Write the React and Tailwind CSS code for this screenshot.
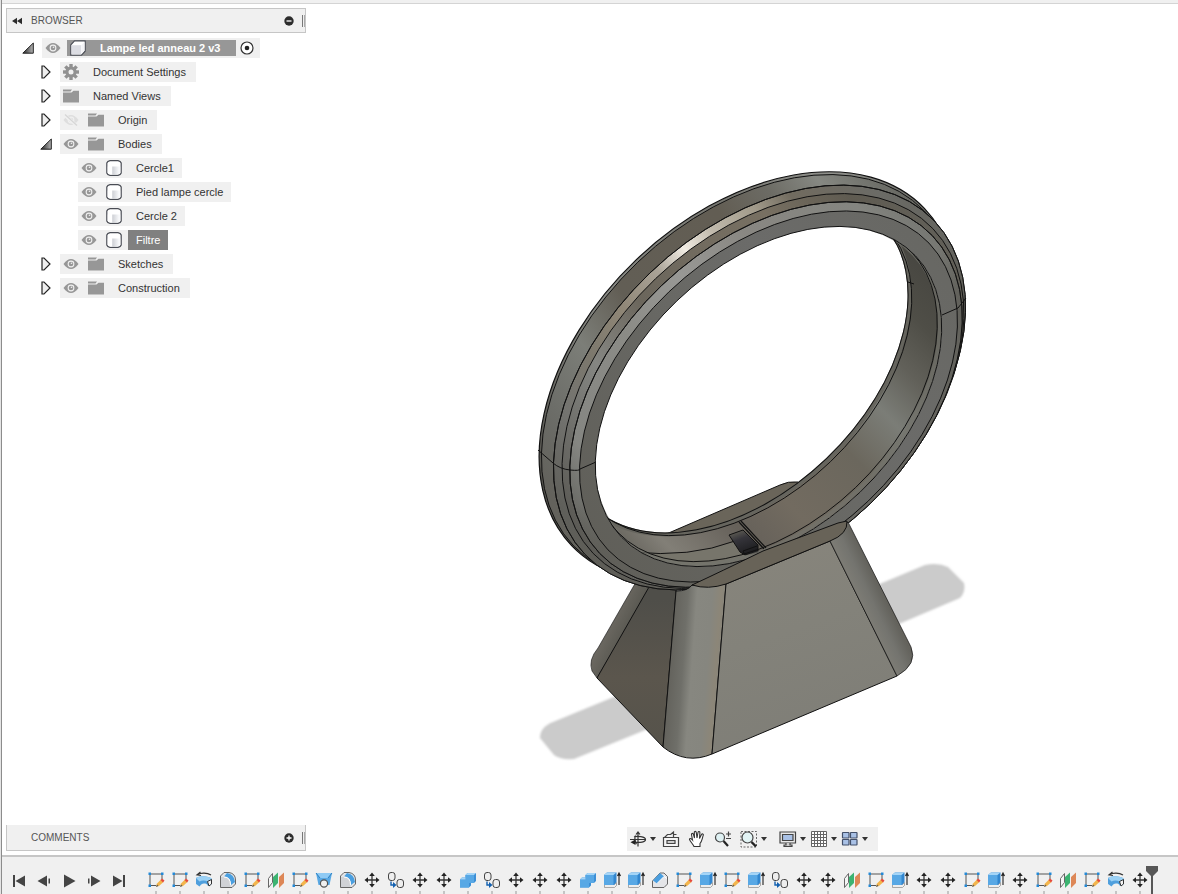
import React, { useState } from 'react';
import clsx from 'clsx';

/* ---------- tree icons ---------- */

const EyeIcon = ({ hidden }) => (
  <svg viewBox="0 0 16 12" className="w-4 h-3" fill="none">
    <path d="M0.500 6C3 2.400 5.400 1 8 1s5 1.400 7.500 5C13 9.600 10.600 11 8 11S3 9.600 0.500 6Z" fill={hidden ? '#dedede' : '#979797'} />
    <circle cx="8" cy="6" r="3.400" fill="#f0f0f0" />
    <circle cx="8" cy="6" r="2.300" fill={hidden ? '#dedede' : '#979797'} />
    <circle cx="8.500" cy="5.300" r="0.800" fill="#f0f0f0" />
    {hidden && (
      <>
        <path d="M1.500 1 13.500 11.500" stroke="#f0f0f0" strokeWidth="3" />
        <path d="M2 0.500 14 11.500" stroke="#d6d6d6" strokeWidth="1.300" />
      </>
    )}
  </svg>
);

const FolderIcon = () => (
  <svg viewBox="0 0 16 14" className="w-4 h-3.5">
    <path d="M0 0.500h9l-1.500 2H0ZM0 3.500h8.500l2-1.800H16V13.500H0Z" fill="#979797" />
  </svg>
);

const GearIcon = () => (
  <svg viewBox="0 0 16 16" className="w-4 h-4">
    <g fill="#919191">
      {[0, 45, 90, 135].map((a) => (
        <rect key={a} x="6.300" y="0" width="3.400" height="16" transform={`rotate(${a} 8 8)`} />
      ))}
      <circle cx="8" cy="8" r="5.600" />
    </g>
    <circle cx="8" cy="8" r="2.500" fill="#f0f0f0" />
  </svg>
);

const BodyIcon = () => (
  <svg viewBox="0 0 16 16" className="w-4 h-4">
    <defs>
      <linearGradient id="bodyFill">
        <stop offset="0" stopColor="#fff" />
        <stop offset="0.300" stopColor="#fff" />
        <stop offset="0.400" stopColor="#d0d2d7" />
        <stop offset="0.900" stopColor="#f8f9fb" />
      </linearGradient>
    </defs>
    <path
      d="M4 .7h8c1.500.3 2.800 1 3.200 2.300v10c-.4 1.300-1.700 2-3.200 2.300H4C2.500 15 1.200 14.300.8 13V3C1.200 1.700 2.500 1 4 .7Z"
      fill="#fff"
      stroke="#4a4d55"
      strokeWidth="1.200"
    />
    <path d="M1.800 6.500h12.400v6.200c-1 1.300-2 1.600-3 1.700H4.500c-1.200-.2-2-.7-2.700-1.700Z" fill="url(#bodyFill)" />
  </svg>
);

const CubeIcon = () => (
  <svg viewBox="0 0 16 16" className="w-4 h-4">
    <path d="M4.500.8H15.200V11l-3.700 4.200H.8V4.800Z" fill="#fff" stroke="#4a4d55" strokeWidth="1.200" strokeLinejoin="round" />
    <path d="M1.500 5.200h9.500v9.300H1.500Z" fill="#dcdde3" />
    <path d="M11.300 5.200 14.500 1.800V10.700l-3.200 3.600Z" fill="#f3f3f6" />
  </svg>
);

const Arrow = ({ open }) =>
  open ? (
    <svg viewBox="0 0 12 12" className="w-3 h-3">
      <defs>
        <linearGradient id="arrowFill" x1="0" y1="0" x2="1" y2="0">
          <stop offset="0.200" stopColor="#444" />
          <stop offset="1" stopColor="#b5b5b5" />
        </linearGradient>
      </defs>
      <path d="M11.300 1v10.200H.8Z" fill="url(#arrowFill)" stroke="#222" />
    </svg>
  ) : (
    <svg viewBox="0 0 10 14" className="w-2.5 h-3.5">
      <path d="M1 1h2L9 7 3 13H1Z" fill="#eee" stroke="#222" strokeWidth="1.200" />
    </svg>
  );

/* ---------- browser tree ---------- */

const Cell = ({ wide, children }) => (
  <span className={clsx('flex items-center justify-center shrink-0', wide ? 'w-7' : 'w-[22px]')}>{children}</span>
);

const nodes = [
  { name: 'Document Settings', icon: 'gear' },
  { name: 'Named Views', icon: 'folder' },
  { name: 'Origin', icon: 'folder', eye: true, hidden: true },
  {
    name: 'Bodies',
    icon: 'folder',
    eye: true,
    children: ['Cercle1', 'Pied lampe cercle', 'Cercle 2', 'Filtre'],
  },
  { name: 'Sketches', icon: 'folder', eye: true },
  { name: 'Construction', icon: 'folder', eye: true },
];

const EyeButton = ({ name, hidden }) => (
  <button aria-label={`Toggle visibility of ${name}`} className="flex">
    <Cell>
      <EyeIcon hidden={hidden} />
    </Cell>
  </button>
);

const TreeNode = ({ node, selected, onSelect }) => {
  const [open, setOpen] = useState(Boolean(node.children));

  return (
    <li>
      <div className="flex h-6 items-center">
        <button aria-label={`Expand ${node.name}`} onClick={() => setOpen(!open)} className="flex w-7 justify-center">
          <Arrow open={open} />
        </button>
        <div className="flex h-5 items-center bg-[#f0f0f0]">
          {node.eye && <EyeButton name={node.name} hidden={node.hidden} />}
          <Cell wide={node.eye}>{node.icon === 'gear' ? <GearIcon /> : <FolderIcon />}</Cell>
          <span className={clsx('pr-2.5', node.eye ? 'pl-2' : 'pl-[11px]')}>{node.name}</span>
        </div>
      </div>
      {open && node.children && (
        <ul className="pl-[46px]">
          {node.children.map((child) => (
            <li key={child} className="flex h-6 items-center">
              <div className="flex h-5 items-center bg-[#f0f0f0]">
                <EyeButton name={child} />
                <Cell wide>
                  <BodyIcon />
                </Cell>
                <button
                  onClick={() => onSelect(child)}
                  className={clsx('h-5 px-2', selected === child && 'bg-[#808080] text-white')}
                >
                  {child}
                </button>
              </div>
            </li>
          ))}
        </ul>
      )}
    </li>
  );
};

const Grip = () => <span className="ml-2 h-3 w-[3px] border-l border-r border-l-[#777] border-r-[#aaa]" />;

const RoundIcon = ({ plus }) => (
  <svg viewBox="0 0 10 10" className="w-2.5 h-2.5">
    <circle cx="5" cy="5" r="4.700" fill="#2c2c2c" />
    <path d={plus ? 'M2.500 5h5M5 2.500v5' : 'M2.500 5h5'} stroke="#fff" strokeWidth="1.300" />
  </svg>
);

const Browser = () => {
  const [selected, setSelected] = useState('Filtre');

  return (
    <div>
      <div className="flex h-[25px] items-center border border-[#c6c6c6] bg-[#f0f0f0]">
        <button aria-label="Collapse panel" className="flex w-6 pl-1">
          <svg viewBox="0 0 12 8" className="w-3 h-2">
            <path d="M6 .8v6.400L1 4ZM11 .8v6.400L6 4Z" fill="#2c2c2c" />
          </svg>
        </button>
        <h2 className="flex-1 text-[10px] text-[#555]">BROWSER</h2>
        <button aria-label="Minimize browser">
          <RoundIcon />
        </button>
        <Grip />
      </div>
      <div className="pl-2 pt-[3px]">
        <div className="flex h-6 items-center">
          <button aria-label="Collapse document" className="flex w-7 justify-center">
            <Arrow open />
          </button>
          <div className="flex h-5 items-center bg-[#f0f0f0] pr-0.5">
            <EyeButton name="document" />
            <div className="ml-[3px] flex h-4 items-center bg-[#979797] pr-4 font-bold text-white">
              <Cell>
                <CubeIcon />
              </Cell>
              <span className="pl-[11px]">Lampe led anneau 2 v3</span>
            </div>
            <button aria-label="Activate document">
              <Cell>
                <svg viewBox="0 0 14 14" className="w-3.5 h-3.5">
                  <circle cx="7" cy="7" r="6" fill="#fff" stroke="#333" strokeWidth="1.200" />
                  <circle cx="7" cy="7" r="2.300" fill="#222" />
                </svg>
              </Cell>
            </button>
          </div>
        </div>
        <ul className="pl-[18px]">
          {nodes.map((node) => (
            <TreeNode key={node.name} node={node} selected={selected} onSelect={setSelected} />
          ))}
        </ul>
      </div>
    </div>
  );
};

/* ---------- 3D model ---------- */

// every rim of the ring is an ellipse tilted by the same angle
const TILT = -43.7;

const Rim = ({ e, ...rest }) => {
  const [cx, cy, rx, ry] = e;
  const a = (TILT * Math.PI) / 180;
  const dx = rx * Math.cos(a);
  const dy = rx * Math.sin(a);
  const arc = `A${rx} ${ry} ${TILT} 0 1`;
  return <path d={`M${cx - dx} ${cy - dy}${arc} ${cx + dx} ${cy + dy}${arc} ${cx - dx} ${cy - dy}Z`} {...rest} />;
};

const rims = {
  back: [748, 377, 244, 162],
  backEdge: [749, 378.5, 242.5, 161],
  shoulder: [759.5, 387.5, 241.5, 158.5],
  groove: [763, 391, 235, 155.5],
  lip: [766, 394.5, 230, 151],
  face: [768.5, 396.5, 222, 144.5],
  hole: [768.5, 396.5, 203.5, 132.5],
  holeStep: [764.5, 392, 203, 132],
  holeBackStep: [740, 367, 202, 131],
  holeBack: [736, 364, 202, 130.5],
};

const Ramp = ({ id, stops, x1 = 540, y1 = 480, x2 = 960, y2 = 170 }) => (
  <linearGradient id={id} gradientUnits="userSpaceOnUse" x1={x1} y1={y1} x2={x2} y2={y2}>
    {stops.map(([offset, color]) => (
      <stop key={offset} offset={offset} stopColor={color} />
    ))}
  </linearGradient>
);

const Model = () => (
  <svg viewBox="530 160 445 610" className="w-[445px] max-w-full" role="img" aria-label="Ring lamp model">
    <defs>
      <Ramp id="outer" stops={[[0, '#63625c'], [0.1, '#6c6d68'], [0.22, '#7c7e78'], [0.34, '#625e55'], [0.58, '#625d53'], [0.68, '#6c6b64'], [0.77, '#868882'], [0.86, '#6e6f69'], [0.95, '#5a5953']]} />
      <Ramp id="rimEdge" stops={[[0, '#55544e'], [0.3, '#8a8b86'], [0.6, '#777771'], [0.8, '#8f908b'], [1, '#55544e']]} />
      <Ramp id="shine" stops={[[0, '#5f5f5a'], [0.12, '#747470'], [0.22, '#7c786d'], [0.32, '#8f8676'], [0.42, '#aaa397'], [0.485, '#f0ebe2'], [0.55, '#c0b9ab'], [0.64, '#a19a8a'], [0.71, '#716b5f'], [0.85, '#6b6b66'], [1, '#5c5b55']]} />
      <Ramp id="grooveFill" stops={[[0, '#5b5a55'], [0.22, '#858682'], [0.36, '#6b665c'], [0.65, '#787062'], [0.8, '#5f5b51'], [1, '#64645f']]} />
      <Ramp id="lipFill" stops={[[0, '#63635e'], [0.1, '#858682'], [0.3, '#8b8b86'], [0.45, '#989895'], [0.6, '#898782'], [0.8, '#848580'], [0.92, '#70716c'], [1, '#5d5c56']]} />
      <Ramp id="faceFill" stops={[[0, '#605f59'], [0.4, '#686864'], [0.6, '#6b6b69'], [0.85, '#686864'], [1, '#66655f']]} />
      <Ramp id="inside" x1={925} y1={240} x2={610} y2={550} stops={[[0, '#45443f'], [0.14, '#4f4e47'], [0.24, '#62615a'], [0.34, '#7b7d77'], [0.46, '#6b675d'], [0.64, '#726b60'], [0.76, '#66615a'], [0.9, '#827f77'], [1, '#5d5b54']]} />
      <linearGradient id="shade" gradientUnits="userSpaceOnUse" x1="752" y1="380" x2="781" y2="420">
        <stop offset="0" stopColor="#5e5d57" stopOpacity="0" />
        <stop offset="1" stopColor="#5e5d57" stopOpacity="0.850" />
      </linearGradient>
      <linearGradient id="frontFace" x1="0" y1="0" x2="0.300" y2="1">
        <stop offset="0" stopColor="#88857c" />
        <stop offset="0.500" stopColor="#83827a" />
        <stop offset="1" stopColor="#7f7e77" />
      </linearGradient>
      <Ramp id="corner" x1={668} y1={680} x2={722} y2={684} stops={[[0, '#63625c'], [0.25, '#6f6f69'], [0.42, '#878780'], [0.7, '#86867f'], [0.86, '#8c8678'], [1, '#84837b']]} />
      <Ramp id="rightCorner" x1={864} y1={610} x2={893} y2={596} stops={[[0, '#7d7c75'], [0.35, '#74746f'], [0.75, '#63625c'], [1, '#7b7367']]} />
      <Ramp id="leftFace" x1={640} y1={600} x2={640} y2={740} stops={[[0, '#4f4e49'], [0.55, '#5b564d'], [1, '#56534b']]} />
      <Ramp id="leftCorner" x1={604} y1={636} x2={622} y2={645} stops={[[0, '#6b6861'], [1, '#585750']]} />
      <Ramp id="slot" x1={742} y1={531} x2={750} y2={553} stops={[[0, '#55534e'], [0.3, '#35343a'], [1, '#1c1c1e']]} />
      <filter id="soft" x="-10%" y="-10%" width="120%" height="120%">
        <feGaussianBlur stdDeviation="1" />
      </filter>
      <clipPath id="holeClip">
        <Rim e={rims.hole} />
      </clipPath>
      <mask id="ringMask" maskUnits="userSpaceOnUse" x="530" y="160" width="445" height="610">
        <rect x="530" y="160" width="445" height="610" fill="#fff" />
        <Rim e={rims.hole} fill="#000" />
      </mask>
      <mask id="insideMask" maskUnits="userSpaceOnUse" x="530" y="160" width="445" height="610">
        <rect x="530" y="160" width="445" height="610" fill="#fff" />
        <Rim e={rims.holeBack} fill="#000" />
      </mask>
    </defs>

    {/* ground shadow */}
    <g fill="#cbcbcb" filter="url(#soft)">
      <path d="M650 682 553 722Q540 727 540 738L554 755Q560 760 574 759L660 724Z" />
      <path d="M870 588 925 565Q938 562 948 567L964 583Q966 592 960 598L880 632Z" />
    </g>

    {/* left side of the foot */}
    <g stroke="#111" strokeLinejoin="round">
      <path d="M640 575 598 648Q588 660 592 671L597 678 655 580Z" fill="url(#leftCorner)" strokeWidth="0.600" />
      <path d="M653 580 597 678 663 747 677 580Z" fill="url(#leftFace)" />
    </g>
    <path d="M664 535 780 485Q788 481 798 482L800 500 730 545Z" fill="#6a655a" stroke="#111" />

    {/* inside of the ring */}
    <g clipPath="url(#holeClip)">
      <g mask="url(#insideMask)">
        <Rim e={rims.hole} fill="url(#inside)" />
        <Rim e={rims.holeBack} fill="none" stroke="#66655e" strokeWidth="8" />
        <Rim e={rims.holeBackStep} fill="none" stroke="#111" />
        <path d="M632 552Q690 558 735 541L752 556 700 572Z" fill="#77756b" />
        <path d="M632 552Q690 558 735 541" fill="none" stroke="#111" />
        <path d="M729 535 743 530 758 545 758 552 745 555 740 552Z" fill="url(#slot)" stroke="#111" />
        <path d="M745 555 743 551 757 546" fill="none" stroke="#111" />
        <path d="M739 522 764 549M741 521 766 548" stroke="#111" strokeWidth="1.200" />
        <path d="M908 282 914 284" stroke="#111" />
      </g>
      <Rim e={[766.5, 394.5, 203.5, 132.5]} fill="none" stroke="#74736c" strokeWidth="4" strokeOpacity="0.700" />
      <Rim e={rims.holeStep} fill="none" stroke="#111" />
      <g mask="url(#insideMask)">
        <Rim e={rims.holeBack} fill="none" stroke="#111" strokeWidth="2" />
      </g>
    </g>

    {/* outside of the ring */}
    <g mask="url(#ringMask)" stroke="#111">
      <Rim e={rims.back} fill="url(#rimEdge)" strokeWidth="1.200" />
      <Rim e={rims.backEdge} fill="url(#outer)" />
      <Rim e={rims.shoulder} fill="url(#shine)" />
      <Rim e={rims.shoulder} fill="url(#shade)" />
      <Rim e={rims.groove} fill="url(#grooveFill)" />
      <Rim e={rims.lip} fill="url(#lipFill)" />
      <Rim e={rims.lip} fill="url(#shade)" />
      <Rim e={rims.face} fill="url(#faceFill)" />
      <path d="M538 450 553 463Q560 469 570 470T580 469L596 462M942 315 958 308 966 298" fill="none" />
    </g>
    <Rim e={rims.hole} fill="none" stroke="#111" />

    {/* front of the foot */}
    <g stroke="#111" strokeLinejoin="round">
      <path d="M676 591Q688 591 692 585L726 584 712 754Q686 765 663 747Z" fill="url(#corner)" />
      <path d="M726 584 830 541 897 676 712 754Z" fill="url(#frontFace)" />
      <path d="M830 541 848 522 911 647Q918 664 897 676Z" fill="url(#rightCorner)" strokeWidth="0.700" />
      <path d="M692 585Q720 572 763 551L838 523 847 521Q848 534 830 541L726 584Q708 590 692 585Z" fill="#686358" />
    </g>
  </svg>
);

/* ---------- navigation bar ---------- */

const Caret = () => (
  <svg viewBox="0 0 6 4" className="w-1.5 h-1">
    <path d="M0 0h6L3 4Z" fill="#333" />
  </svg>
);

const navIcons = {
  Orbit: (
    <g fill="none" stroke="#333" strokeWidth="1.200">
      <path d="M9 2v14.500M7 4.500l2-2.500 2 2.500" />
      <path d="M5 6.800C8 5.800 16.500 6.500 16.500 9.500S11 12.500 6 12.300M6.500 5.500C5 9 6.500 13 7.500 14" />
      <path d="M6.500 9.500v5.500L1.500 12.300Z" fill="#222" stroke="none" />
      <path d="M1 9.500h15" strokeWidth="1" />
    </g>
  ),
  'Look At': (
    <g fill="none" stroke="#444" strokeWidth="1.200">
      <path d="M1.500 7.500h15v9h-15Z" fill="#f5f5f5" />
      <path d="M5 10.500h8v3H5Z" fill="#ccc" />
      <path d="M2.500 7.500 5.500 4.500h3M8.500 4.500 11.500 2v5.500M11.500 4.500h3" />
    </g>
  ),
  Pan: (
    <path
      d="M6 16.500C5 14 2.500 12 1.500 9.500c0-1.500 1.500-1.300 3 .5L3.500 4.500c0-1.500 1.700-1.500 2 0L6.500 8 6.300 2.500c0-1.500 1.900-1.500 2 0L9 8l1-5.500c.3-1.400 2-1.200 1.900.3L11.500 8.500l2-4c.7-1.200 2.200-.5 1.800.7-1.300 3.800-1.300 6-3.300 8.300v3Z"
      fill="#fff"
      stroke="#333"
      strokeWidth="1.100"
    />
  ),
  Zoom: (
    <g stroke="#444" strokeWidth="1.200" fill="none">
      <circle cx="6" cy="7.500" r="4.500" fill="#dff1f3" />
      <path d="m9.500 11 4.500 5" strokeWidth="2.200" stroke="#222" />
      <path d="M12 4h5M14.500 1.500v5M12 8.500h5" />
    </g>
  ),
  'Zoom Window': (
    <g stroke="#444" strokeWidth="1.200" fill="none">
      <path d="M1 1.500h15.500V17H1Z" strokeDasharray="2 1.500" strokeWidth="1" stroke="#666" />
      <circle cx="7.500" cy="7.500" r="5.500" fill="#e2f3f4" />
      <path d="m11.500 12 4.500 4.500" strokeWidth="2.400" stroke="#222" />
    </g>
  ),
  'Display Settings': (
    <g stroke="#444" strokeWidth="1.200">
      <path d="M1 2h15.500v11H1Z" fill="#e9e9e9" />
      <path d="M3.500 4.500H14v6H3.500Z" fill="#a9c1e6" />
      <path d="M7 13v2H5v1.500h8V15h-2v-2" fill="#ccc" />
    </g>
  ),
  'Grid Settings': (
    <path d="M1.500 1.500h15v15h-15ZM4.500 1.500v15M7.500 1.500v15M10.500 1.500v15M13.500 1.500v15M1.500 4.500h15M1.500 7.500h15M1.500 10.500h15M1.500 13.500h15" fill="#fff" stroke="#666" />
  ),
  Viewports: (
    <g fill="#a9c1e6" stroke="#43506a" strokeWidth="1.200">
      <rect x="1.500" y="2.500" width="6.500" height="5.500" rx="0.500" />
      <rect x="9.500" y="2.500" width="6.500" height="5.500" rx="0.500" />
      <rect x="1.500" y="9.500" width="6.500" height="5.500" rx="0.500" />
      <rect x="9.500" y="9.500" width="6.500" height="5.500" rx="0.500" />
    </g>
  ),
};

const NavButton = ({ name, caret }) => (
  <button aria-label={name} className="flex items-center gap-[3px]">
    <svg viewBox="0 0 18 18" className="w-[18px] h-[18px]">
      {navIcons[name]}
    </svg>
    {caret && <Caret />}
  </button>
);

const NavBar = () => (
  <div className="flex h-6 items-center self-center bg-[#f0f0f0] pl-0.5 pr-2.5">
    <div className="flex gap-2">
      <div className="flex gap-1.5">
        <NavButton name="Orbit" caret />
        <NavButton name="Look At" />
      </div>
      <NavButton name="Pan" />
      <NavButton name="Zoom" />
      <NavButton name="Zoom Window" caret />
    </div>
    <div className="ml-3 flex gap-1">
      <NavButton name="Display Settings" caret />
      <NavButton name="Grid Settings" caret />
      <NavButton name="Viewports" caret />
    </div>
  </div>
);

/* ---------- timeline ---------- */

const featureIcons = {
  sketch: (
    <>
      <path d="M3 3h12v5M3 3v11.500h6" fill="none" stroke="#555" />
      <path d="M1.500 1.500h2.500v2.500H1.500ZM14 1.500h2.500v2.500H14ZM1.500 13.500h2.500V16H1.500Z" fill="#2389d7" />
      <path d="m9 15.500 1-3 4-4 2.500 2.500-4.500 4Z" fill="#f3b54c" />
      <path d="m13.500 9 1.500-1.500 2.500 2L16 11.500Z" fill="#e44b3c" />
      <path d="m9 16 1-2.500 1.500 1.500Z" fill="#555" />
    </>
  ),
  revolve: (
    <>
      <path d="M1 7C4 4.500 14 4.500 17 8v5l-4 2c-1-2-2-2.500-4-2.500s-3 1-4.500 3L1 13Z" fill="#4f9fdd" />
      <path d="M1 7C4 4.500 14 4.500 17 8l-4.500 2.500C10 9 7 9 4.500 10.500Z" fill="#9bd1f5" />
      <path d="M12.500 10.500 16.500 8.500v4.500l-2.500 2Z" fill="#f5f5f5" stroke="#333" />
      <path d="M2.500 3.500C6 1.500 12 1.500 16 4M5.500 1 2 3.800l4 .7" fill="none" stroke="#333" strokeWidth="1.200" />
    </>
  ),
  fillet: (
    <>
      <path d="M1.500 5 5 1.500h5q6.500 1 6.500 7.500v4L13 16.500H1.500Z" fill="#e3e4e7" stroke="#666" />
      <path d="M8 2q7 1 8 9l-4 3q0-8-7-8.500Z" fill="#4a9fe0" />
      <path d="M2 6h3q6 .5 6.500 6v4H2Z" fill="#d0d2d6" />
      <path d="M5 6q6.500 0 6.500 8" fill="none" stroke="#fff" />
    </>
  ),
  chamfer: (
    <>
      <path d="M1.500 10 9 2h4l3.500 3.500V13L13 16.500H1.500Z" fill="#e4e5e8" stroke="#666" />
      <path d="M2 9.500 9 2l4 3.500-7 7Z" fill="#4a9fe0" />
      <path d="M6 12.500 13 5.500l3 2" fill="none" stroke="#fff" />
    </>
  ),
  plane: (
    <>
      <path d="M1.500 7.500 5.500 2.500v9l-4 5Z" fill="#f5f5f5" stroke="#666" />
      <path d="M6 6 11 1.500V12l-5 5Z" fill="#3cb371" />
      <path d="M12 6 17 1.500V12l-5 5Z" fill="#dd8757" />
    </>
  ),
  loft: (
    <>
      <path d="M1 2h16l-2.500 12h-11Z" fill="#58a8e4" />
      <path d="M1 2h16l-4 5H5Z" fill="#8fcaf4" />
      <path d="m1 2 4 5M17 2l-4 5" stroke="#2a7fc2" />
      <circle cx="9" cy="12.500" r="3.600" fill="#f0f0f0" stroke="#555" strokeWidth="1.200" />
    </>
  ),
  move: (
    <>
      <path d="M9 3v12M3 9h12" stroke="#333" strokeWidth="1.300" />
      <path d="M9 1.500 11.800 5H6.200ZM9 16.500 11.800 13H6.200ZM1.500 9 5 6.200v5.600ZM16.500 9 13 6.200v5.600Z" fill="#222" />
    </>
  ),
  copy: (
    <>
      <rect x="1.500" y="1.500" width="6.500" height="8" rx="2.500" fill="#eee" stroke="#444" />
      <rect x="10" y="8.500" width="6.500" height="8" rx="2.500" fill="#eee" stroke="#444" />
      <path d="M4 10.500V14h3" fill="none" stroke="#1260b0" strokeWidth="1.400" />
      <path d="m6 11 3.500 3L6 17Z" fill="#1260b0" />
    </>
  ),
  combine: (
    <>
      <path d="M1 8.500 3 6.500h3.500V4l2-2H17v8l-2 2h-3v2.500l-2 2H1Z" fill="#3c8fd6" />
      <path d="M1 8.500h5.500V4H15v8h-5v4.500H1Z" fill="#58a8e5" />
      <path d="M1 8.500 3 6.500h3.500v2ZM6.500 4l2-2H17l-2 2Z" fill="#a5d5f7" />
    </>
  ),
  extrude: (
    <>
      <path d="M1.500 13.500h10l2-2v3l-2 2h-10Z" fill="#eee" stroke="#888" strokeWidth="0.700" />
      <path d="M1 4 4 1.500h9.500V11L11 14H1Z" fill="#3186cf" />
      <path d="M1 4h9.500v10H1Z" fill="#58a8e5" />
      <path d="M1 4 4 1.500h9.500L10.500 4Z" fill="#a5d5f7" />
      <path d="M16 14V3M14.500 5 16 2l1.500 3" stroke="#222" strokeWidth="1.100" fill="none" />
    </>
  ),
};

const features = [
  'sketch', 'sketch', 'revolve', 'fillet', 'sketch', 'plane', 'sketch', 'loft', 'fillet', 'move', 'copy',
  'move', 'move', 'combine', 'copy', 'move', 'move', 'move', 'combine', 'extrude', 'extrude', 'chamfer',
  'sketch', 'extrude', 'sketch', 'extrude', 'copy', 'move', 'move', 'plane', 'sketch', 'extrude', 'move',
  'move', 'sketch', 'extrude', 'move', 'sketch', 'plane', 'sketch', 'revolve', 'move',
];

const controls = [
  { name: 'Go to start', d: 'M2 2h2v12H2ZM14 2.500v11L4.500 8Z' },
  { name: 'Step back', d: 'M11 2.500v11L1.500 8ZM12.500 5.500H14v5h-1.500Z' },
  { name: 'Play', d: 'M3 1.500 14.500 8 3 14.500Z' },
  { name: 'Step forward', d: 'M5 2.500v11L14.500 8ZM2 5.500h1.500v5H2Z' },
  { name: 'Go to end', d: 'M12 2h2v12h-2ZM2 2.500v11L11.500 8Z' },
];

const Timeline = () => (
  <footer className="flex h-[39px] border-t-2 border-[#c6c6c6] bg-[#f0f0f0] pl-1">
    <div className="flex items-center pt-[11px]">
      {controls.map((c) => (
        <button key={c.name} aria-label={c.name} className="flex w-[25px] justify-center">
          <svg viewBox="0 0 16 16" className="w-4 h-4">
            <path d={c.d} fill="#444" />
          </svg>
        </button>
      ))}
    </div>
    <ol className="ml-[13px] flex">
      {features.map((f, i) => (
        <li key={i} className="flex w-6 flex-col items-center justify-between pt-3.5">
          <button aria-label={f} className="flex">
            <svg viewBox="0 0 18 18" className="w-[18px] h-[18px]">
              {featureIcons[f]}
            </svg>
          </button>
          <span className="h-[3px] w-0.5 bg-[#c4c4c4]" />
        </li>
      ))}
    </ol>
    <svg viewBox="0 0 12 28" className="-ml-1.5 mt-[9px] h-7 w-3 shrink-0">
      <path d="M0 0h12v5L7 10v18H5V10L0 5Z" fill="#575757" />
    </svg>
  </footer>
);

const App = () => (
  <div className="flex min-h-screen flex-col border-l border-[#e4e4e4] bg-white font-['Liberation_Sans',Arial,sans-serif] text-[11px] leading-4 text-[#333]">
    <div className="flex flex-1 flex-col border-l border-[#8c8c8c]">
      <div className="h-1 border-b border-[#d4d4d4] bg-[#f0f0f0]" />
      <main className="flex flex-1">
        <aside className="flex w-[304px] shrink-0 flex-col justify-between pb-1 pl-1 pt-1">
          <Browser />
          <div className="flex h-[26px] items-center border border-t-0 border-[#c6c6c6] bg-[#f0f0f0] pl-6">
            <h2 className="flex-1 text-[10px] text-[#555]">COMMENTS</h2>
            <button aria-label="Add comment">
              <RoundIcon plus />
            </button>
            <Grip />
          </div>
        </aside>
        <section className="flex flex-1 flex-col items-center justify-between pb-1 pl-5 pt-[156px]">
          <Model />
          <NavBar />
        </section>
      </main>
      <Timeline />
    </div>
  </div>
);

export default App;
